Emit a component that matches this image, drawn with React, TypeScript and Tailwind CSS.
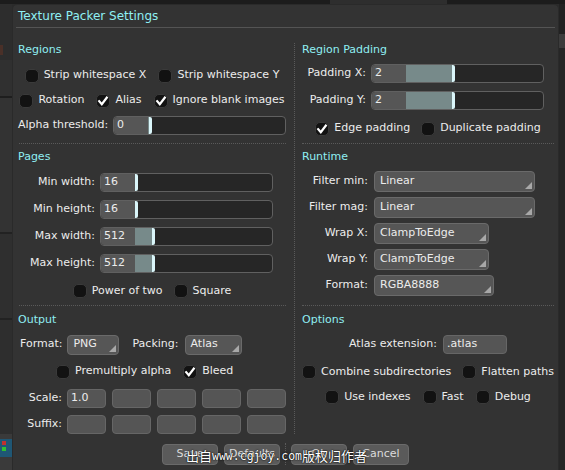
import React from "react";

const Check = ({ checked = false }: { checked?: boolean }) => (
  <span className="w-[14px] h-[14px] rounded-[5px] bg-[#121212] border border-[#3a3a3a] flex items-center justify-center shrink-0">
    {checked && (
      <svg width="12" height="12" viewBox="0 0 12 12">
        <path d="M2.2 6.2 L4.8 9.2 L9.8 2.6" stroke="#ffffff" strokeWidth="2.2" fill="none" strokeLinecap="square" />
      </svg>
    )}
  </span>
);

const CheckItem = ({ label, checked = false }: { label: string; checked?: boolean }) => (
  <div className="flex items-center gap-[5px]">
    <Check checked={checked} />
    <span className="whitespace-nowrap">{label}</span>
  </div>
);

const Slider = ({ value, fill }: { value: string; fill: string }) => (
  <div className="w-[173px] h-[19px] rounded-[4px] border border-[#606060] bg-[#262626] flex overflow-hidden shrink-0">
    <div className="w-[34px] bg-[#565656] flex items-center pl-[3px]">{value}</div>
    <div className={`${fill} bg-[#778a8a]`} />
    <div className="w-[3px] bg-[#daf6fa] rounded-r-[2px]" />
    <div className="flex-1" />
  </div>
);

const Select = ({ value, w, h = "h-[21px]" }: { value: string; w: string; h?: string }) => (
  <div className={`${w} ${h} relative rounded-[4px] border border-[#6a6a6a] bg-[#565656] flex items-center pl-[5px] shrink-0`}>
    <span className="whitespace-nowrap">{value}</span>
    <svg className="absolute right-[2px] bottom-[2px]" width="7" height="7" viewBox="0 0 7 7">
      <path d="M7 0 L7 7 L0 7 Z" fill="#a8a8a8" />
    </svg>
  </div>
);

const Field = ({ value = "", w = "w-[39px]" }: { value?: string; w?: string }) => (
  <div className={`${w} h-[19px] rounded-[4px] border border-[#666] bg-[#555555] flex items-center pl-[3px] shrink-0`}>
    {value}
  </div>
);

const Btn = ({ label }: { label: string }) => (
  <div className="w-[56px] h-[21px] rounded-[4px] border border-[#6a6a6a] bg-[#5a5a5a] flex items-center justify-center text-[#dcdcdc]">
    {label}
  </div>
);

const Header = ({ children }: { children: React.ReactNode }) => (
  <div className="h-[14px] flex items-center text-[#8feef2]">{children}</div>
);

const Sep = ({ mt }: { mt: string }) => <div className={`${mt} border-t border-dotted border-[#5a5a5a]`} />;

export default function App() {
  return (
    <div className="w-[565px] h-[470px] overflow-hidden bg-[#2b2b2b] relative font-['DejaVu_Sans',sans-serif] text-[11px] text-[#ececec] flex flex-col">
      <div className="h-[4px] bg-[#1c1c1c] flex shrink-0">
        <div className="ml-[330px] w-[117px] bg-[#2e2e2e]" />
      </div>
      <div className="flex flex-1 min-h-0">
        {/* left desktop strip */}
        <div className="w-[12px] flex flex-col shrink-0">
          <div className="h-[36px] bg-[#2d2d2d]" />
          <div className="h-[20px] bg-[#2d2d2d] flex"><div className="w-[3px] h-[10px] mt-[5px] bg-[#4a3028]" /></div>
          <div className="h-[36px] bg-[#303030]" />
          <div className="h-[2px] bg-[#1e1e1e]" />
          <div className="h-[134px] bg-[#333333]" />
          <div className="h-[2px] bg-[#222]" />
          <div className="h-[84px] bg-[#2f2f2f]" />
          <div className="h-[2px] bg-[#222]" />
          <div className="h-[114px] bg-[#2e2e2e]" />
          <div className="h-[5px] bg-[#3a3a3a]" />
          <div className="h-[18px] bg-[#1f5775] flex flex-col items-start pl-[2px] pt-[2px] gap-[2px]">
            <div className="w-[4px] h-[4px] bg-[#c03030]" />
            <div className="w-[4px] h-[4px] bg-[#30c030]" />
          </div>
          <div className="flex-1 bg-[#3a3a3a]" />
        </div>

        {/* dialog */}
        <div className="w-[547px] h-[480px] shrink-0 bg-[#333333] rounded-t-[5px] border-t border-l border-r border-[#2a2a2a] flex flex-col">
          <div className="h-[22px] flex items-center pl-[5px] text-[12px] text-[#8ff0f4]">Texture Packer Settings</div>
          <div className="mx-[3px] h-[1px] bg-[#545454]" />
          <div className="flex px-[2px] pt-[15px] h-[406px]">
            {/* left column */}
            <div className="w-[279px] pl-[3px] pr-[8px] flex flex-col shrink-0">
              <Header>Regions</Header>
              <div className="mt-[6px] h-[25px] flex items-center justify-center gap-[12px]">
                <CheckItem label="Strip whitespace X" />
                <CheckItem label="Strip whitespace Y" />
              </div>
              <div className="h-[25px] flex items-center justify-center gap-[12px]">
                <CheckItem label="Rotation" />
                <CheckItem label="Alias" checked />
                <CheckItem label="Ignore blank images" checked />
              </div>
              <div className="h-[25px] flex items-center justify-between">
                <span>Alpha threshold:</span>
                <Slider value="0" fill="w-[1px]" />
              </div>
              <div className="pl-[1px]"><Sep mt="mt-[5px]" /></div>

              <div className="mt-[6px]"><Header>Pages</Header></div>
              <div className="mt-[5px] flex flex-col">
                {[
                  ["Min width:", "16", "w-[0px]"],
                  ["Min height:", "16", "w-[0px]"],
                  ["Max width:", "512", "w-[17px]"],
                  ["Max height:", "512", "w-[17px]"],
                ].map(([l, v, f]) => (
                  <div key={l} className="h-[27px] flex items-center gap-[5px]">
                    <span className="w-[77px] text-right whitespace-nowrap">{l}</span>
                    <Slider value={v} fill={f} />
                  </div>
                ))}
              </div>
              <div className="h-[28px] flex items-center justify-center gap-[11px]">
                <CheckItem label="Power of two" />
                <CheckItem label="Square" />
              </div>
              <div className="pl-[1px]"><Sep mt="mt-0" /></div>

              <div className="mt-[7px]"><Header>Output</Header></div>
              <div className="mt-[5px] h-[25px] flex items-center pl-[2px]">
                <span>Format:</span>
                <div className="ml-[5px]"><Select value="PNG" w="w-[52px]" h="h-[20px]" /></div>
                <span className="ml-[13px]">Packing:</span>
                <div className="ml-[6px]"><Select value="Atlas" w="w-[57px]" h="h-[20px]" /></div>
              </div>
              <div className="h-[29px] flex items-center pl-[38px] gap-[12px]">
                <CheckItem label="Premultiply alpha" />
                <CheckItem label="Bleed" checked />
              </div>
              <div className="h-[24px] flex items-center gap-[5px]">
                <span className="w-[44px] text-right">Scale:</span>
                <div className="flex gap-[6px]">
                  <Field value="1.0" />
                  <Field />
                  <Field />
                  <Field />
                  <Field />
                </div>
              </div>
              <div className="mt-[5px] h-[19px] flex items-center gap-[5px]">
                <span className="w-[44px] text-right">Suffix:</span>
                <div className="flex gap-[6px]">
                  <Field />
                  <Field />
                  <Field />
                  <Field />
                  <Field />
                </div>
              </div>
            </div>

            {/* right column */}
            <div className="flex-1 border-l border-dotted border-[#5a5a5a] pl-[7px] pr-[3px] flex flex-col">
              <Header>Region Padding</Header>
              <div className="mt-[3px] h-[27px] flex items-center gap-[5px]">
                <span className="w-[64px] text-right whitespace-nowrap">Padding X:</span>
                <Slider value="2" fill="w-[46px]" />
              </div>
              <div className="h-[27px] flex items-center gap-[5px]">
                <span className="w-[64px] text-right whitespace-nowrap">Padding Y:</span>
                <Slider value="2" fill="w-[46px]" />
              </div>
              <div className="h-[29px] flex items-center justify-center gap-[11px]">
                <CheckItem label="Edge padding" checked />
                <CheckItem label="Duplicate padding" />
              </div>
              <Sep mt="mt-0" />

              <div className="mt-[6px]"><Header>Runtime</Header></div>
              <div className="mt-[4px] flex flex-col">
                {[
                  ["Filter min:", "Linear", "w-[161px]"],
                  ["Filter mag:", "Linear", "w-[161px]"],
                  ["Wrap X:", "ClampToEdge", "w-[115px]"],
                  ["Wrap Y:", "ClampToEdge", "w-[115px]"],
                  ["Format:", "RGBA8888", "w-[120px]"],
                ].map(([l, v, w]) => (
                  <div key={l} className="h-[26px] flex items-center gap-[6px]">
                    <span className="w-[66px] text-right whitespace-nowrap">{l}</span>
                    <Select value={v} w={w} />
                  </div>
                ))}
              </div>
              <Sep mt="mt-[7px]" />

              <div className="mt-[7px]"><Header>Options</Header></div>
              <div className="mt-[5px] h-[25px] flex items-center justify-center gap-[6px]">
                <span>Atlas extension:</span>
                <Field value=".atlas" w="w-[64px]" />
              </div>
              <div className="h-[30px] flex items-center justify-center gap-[11px]">
                <CheckItem label="Combine subdirectories" />
                <CheckItem label="Flatten paths" />
              </div>
              <div className="h-[20px] flex items-center justify-center gap-[12px]">
                <CheckItem label="Use indexes" />
                <CheckItem label="Fast" />
                <CheckItem label="Debug" />
              </div>
            </div>
          </div>

          {/* buttons */}
          <div className="mt-[10px] flex justify-center items-start">
            <div className="flex gap-[6px]">
              <Btn label="Save" />
              <Btn label="Defaults" />
            </div>
            <div className="mx-[5px] h-[22px] border-l border-dotted border-[#5a5a5a] -mt-[1px]" />
            <div className="flex gap-[6px]">
              <Btn label="Ok" />
              <Btn label="Cancel" />
            </div>
          </div>
        </div>

        <div className="w-[6px] flex flex-col shrink-0">
          <div className="h-[30px] bg-[#222]" />
          <div className="h-[14px] bg-[#3c3c3c]" />
          <div className="flex-1 bg-[#262626]" />
        </div>
      </div>

      {/* watermark */}
      <div className="absolute left-[186px] top-[448px] flex items-end text-white whitespace-nowrap [text-shadow:0_0_2px_#000,0_0_1px_#000]">
        <span className="font-['Noto_Sans_CJK_SC',sans-serif] text-[13px] leading-[16px]">出自</span>
        <span className="font-['DejaVu_Sans_Mono',monospace] text-[11.5px] leading-[16px]">www.cgjoy.com </span>
        <span className="font-['Noto_Sans_CJK_SC',sans-serif] text-[13px] leading-[16px]">版权归作者</span>
      </div>
    </div>
  );
}
